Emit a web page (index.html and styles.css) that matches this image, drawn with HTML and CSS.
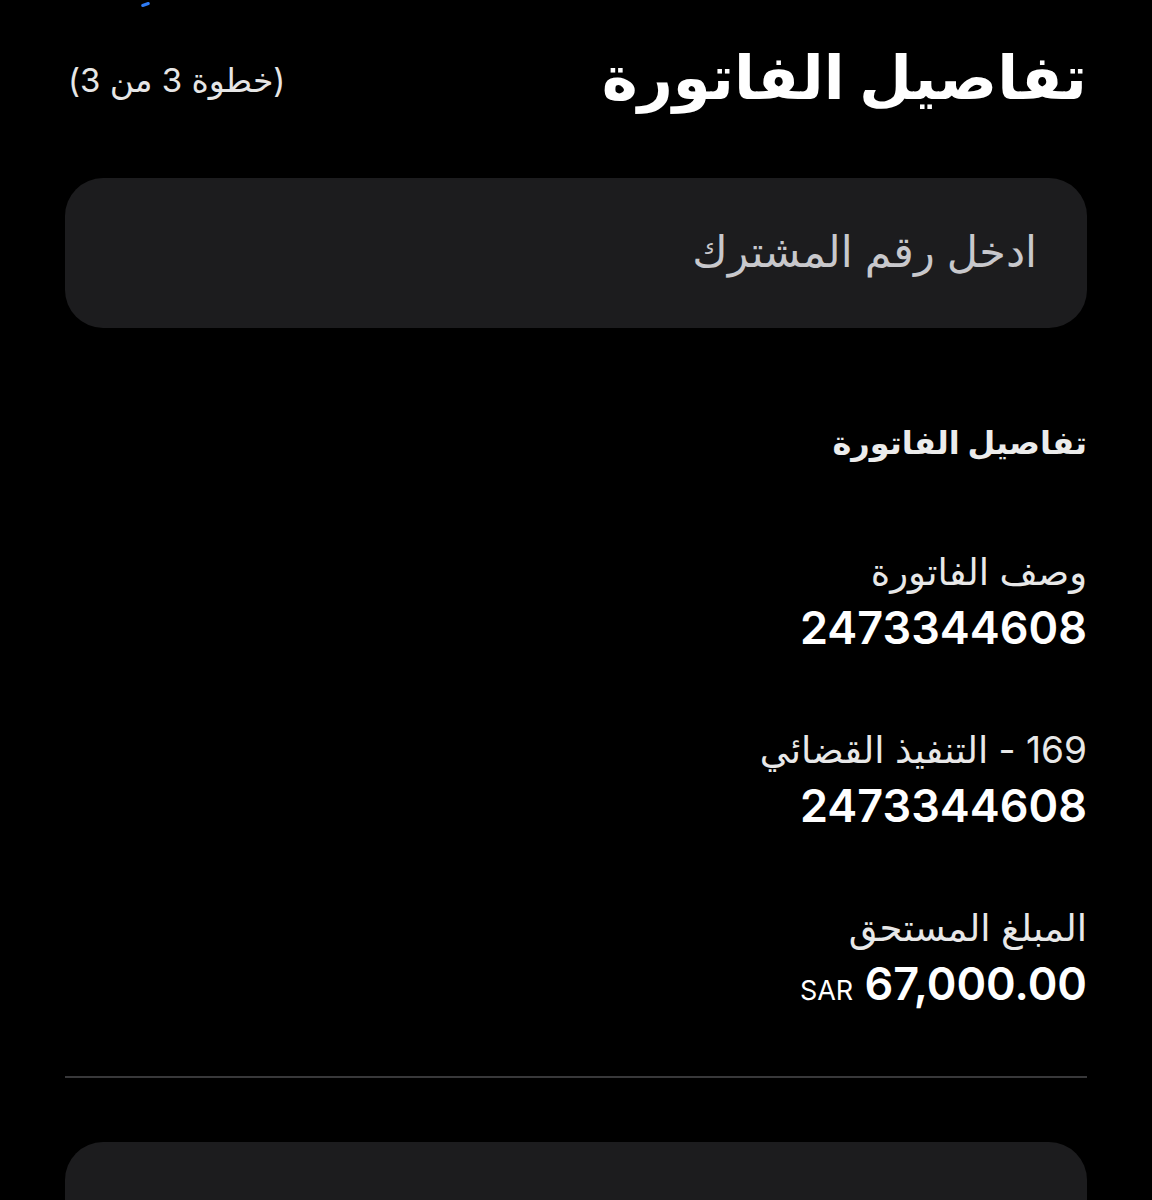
FILE: index.html
```html
<!DOCTYPE html>
<html lang="ar" dir="rtl">
<head>
<meta charset="utf-8">
<title>تفاصيل الفاتورة</title>
<link rel="stylesheet" href="styles.css">
</head>
<body>
<div class="page">
  <div class="topbar"><span class="back-mark"></span></div>
  <header class="header">
    <h1 class="title">تفاصيل الفاتورة</h1>
    <span class="step">(خطوة 3 من 3)</span>
  </header>
  <div class="input"><span class="placeholder">ادخل رقم المشترك</span></div>
  <h2 class="section">تفاصيل الفاتورة</h2>
  <div class="list">
    <div class="item">
      <div class="label">وصف الفاتورة</div>
      <div class="value">2473344608</div>
    </div>
    <div class="item">
      <div class="label">169 - التنفيذ القضائي</div>
      <div class="value">2473344608</div>
    </div>
    <div class="item">
      <div class="label">المبلغ المستحق</div>
      <div class="value"><span class="amount">67,000.00</span> <span class="cur">SAR</span></div>
    </div>
  </div>
  <div class="divider"></div>
  <div class="box"></div>
</div>
</body>
</html>
```
FILE: styles.css
```css
html, body {
  margin: 0;
  padding: 0;
  background: #000;
  height: 1200px;
  overflow: hidden;
}
body {
  font-family: Inter, "DejaVu Sans", sans-serif;
  color: #fff;
}
.page {
  padding: 0 65px;
}
.topbar {
  height: 12px;
  display: flex;
  justify-content: flex-end;
  padding-left: 76px;
}
.back-mark {
  width: 9px;
  height: 3px;
  margin-top: 3px;
  background: #2f7cf6;
  border-radius: 2px;
  transform: rotate(-20deg);
}
.header {
  height: 130px;
  display: flex;
  align-items: center;
  justify-content: space-between;
}
.title {
  margin: 0;
  font-size: 61px;
  font-weight: 700;
  line-height: 1;
  color: #fff;
}
.step {
  font-size: 33px;
  color: #e6e6e6;
  padding-left: 3px;
  margin-top: 6px;
}
.input {
  margin-top: 36px;
  height: 150px;
  background: #1c1c1e;
  border-radius: 38px;
  display: flex;
  align-items: center;
  padding: 0 50px;
}
.placeholder {
  font-size: 43px;
  color: #c8c8cc;
  margin-top: -4px;
}
.section {
  margin: 85px 0 0;
  font-size: 32px;
  font-weight: 700;
  line-height: 60px;
  height: 60px;
  color: #ececec;
}
.list {
  margin-top: 71px;
}
.item {
  margin-bottom: 66px;
}
.item:last-child {
  margin-bottom: 0;
}
.label {
  font-size: 37px;
  line-height: 56px;
  height: 56px;
  color: #e8e8e8;
}
.value {
  font-size: 45px;
  font-weight: 600;
  line-height: 56px;
  height: 56px;
  color: #fff;
}
.cur {
  font-size: 27px;
  font-weight: 400;
  line-height: 1;
}
.divider {
  margin-top: 64px;
  height: 2px;
  background: #38383a;
}
.box {
  margin-top: 64px;
  height: 200px;
  background: #1c1c1e;
  border-radius: 38px;
}
```
